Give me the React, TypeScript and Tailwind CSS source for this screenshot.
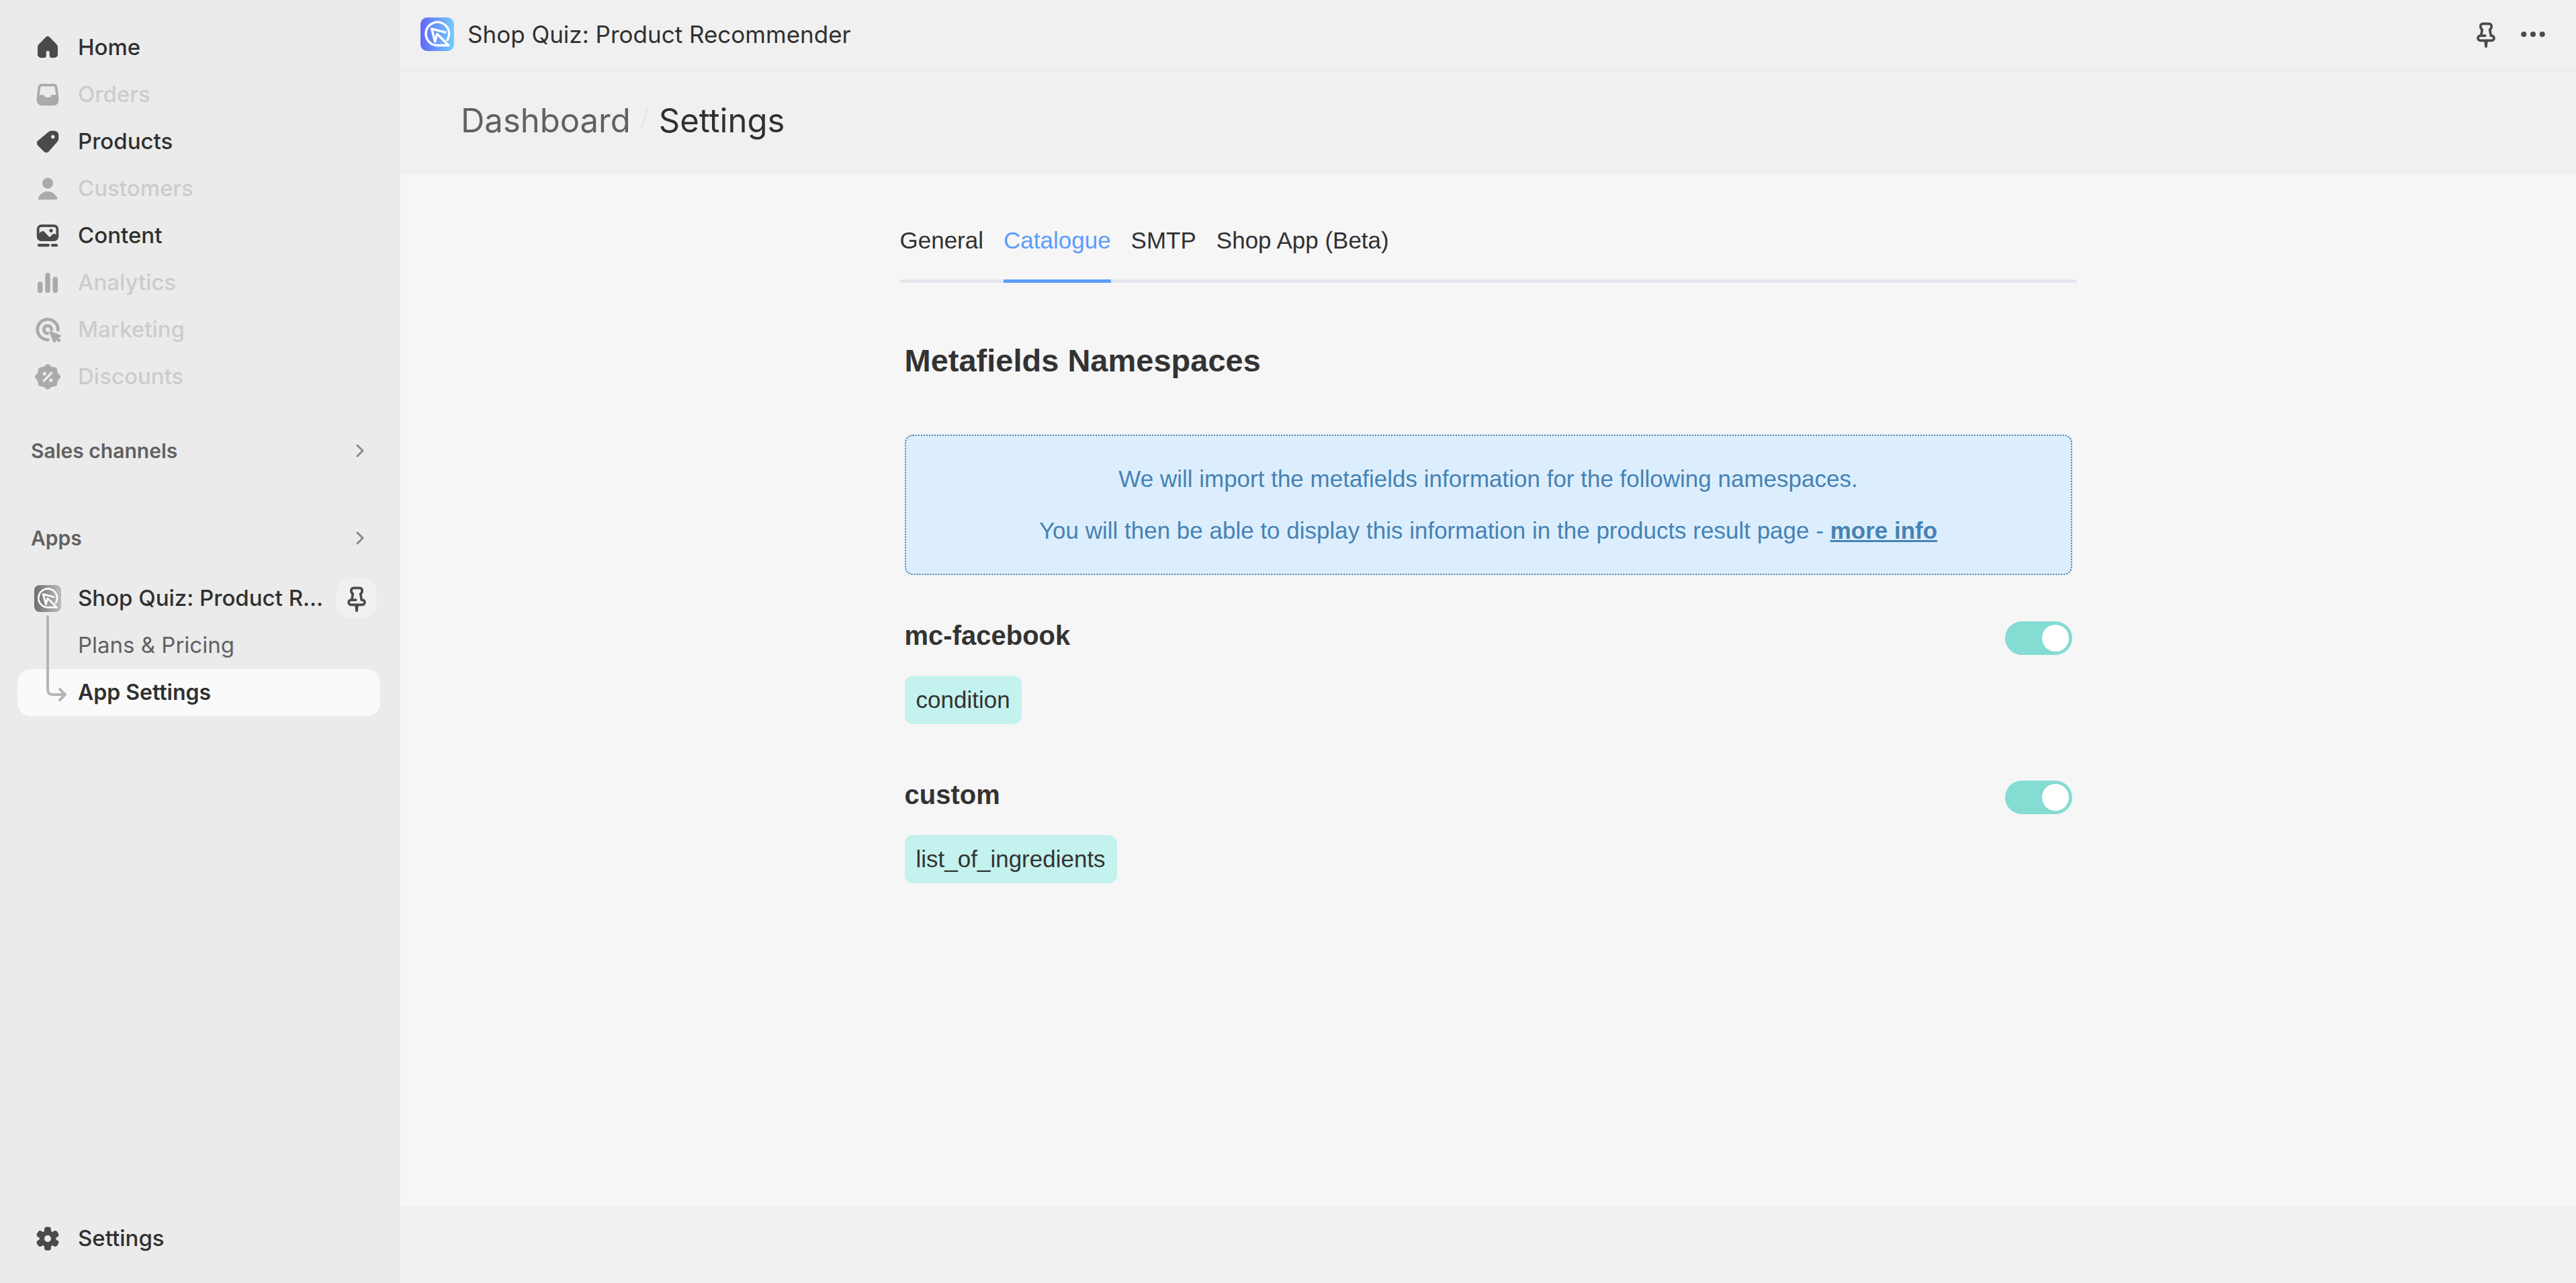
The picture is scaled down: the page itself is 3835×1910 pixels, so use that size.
import React, { useId, useState } from "react";

function Icon({ children, className = "" }: { children: React.ReactNode; className?: string }) {
  return (
    <svg viewBox="0 0 20 20" className={`h-[50px] w-[50px] shrink-0 ${className}`} fill="currentColor" aria-hidden="true">
      {children}
    </svg>
  );
}

const HomeIcon = (
  <path d="M8.75 3.75a1.75 1.75 0 0 1 2.5 0l3.95 4.1c.5.55.8 1.25.8 2v4.25a1.9 1.9 0 0 1-1.9 1.9h-1.8a1.2 1.2 0 0 1-1.2-1.2v-2a.9.9 0 0 0-.9-.9h-.2a.9.9 0 0 0-.9.9v2a1.2 1.2 0 0 1-1.2 1.2h-2A1.9 1.9 0 0 1 4 14.1V9.85c0-.75.3-1.45.8-2z" />
);

const OrdersIcon = (
  <path
    fillRule="evenodd"
    d="M6.5 3.5h7a2.3 2.3 0 0 1 2.28 2l.59 4.8q.13 1 .13 2v1.2a3 3 0 0 1-3 3h-7a3 3 0 0 1-3-3v-1.2q0-1 .13-2l.59-4.8a2.3 2.3 0 0 1 2.28-2M6.5 5a.8.8 0 0 0-.8.7L5.1 10.1h2.15c.4 0 .65.2.8.55l.15.3c.15.35.4.55.8.55h2c.4 0 .65-.2.8-.55l.15-.3c.15-.35.4-.55.8-.55h2.15l-.6-4.4a.8.8 0 0 0-.8-.7z"
  />
);

const ProductsIcon = (
  <path
    fillRule="evenodd"
    d="M10.3 4.3c.5-.5 1.2-.8 1.95-.8h1.75a2.5 2.5 0 0 1 2.5 2.5v2.1c0 .7-.25 1.35-.7 1.85l-5.15 5.85a1.95 1.95 0 0 1-2.85.1L4.1 12.2a2 2 0 0 1-.05-2.75zM13.1 8.1a1.05 1.05 0 1 0 0-2.1 1.05 1.05 0 0 0 0 2.1"
  />
);

const CustomersIcon = (
  <>
    <circle cx="10" cy="6.7" r="3.2" />
    <path d="M4.3 15.6C5.3 13.2 7.5 11.6 10 11.6s4.7 1.6 5.7 4c.2.5-.1.9-.7.9H5c-.6 0-.9-.4-.7-.9" />
  </>
);

const ContentIcon = (
  <>
    <path
      fillRule="evenodd"
      d="M6.2 3.3h7.6a2.7 2.7 0 0 1 2.7 2.7v4.5a2.7 2.7 0 0 1-2.7 2.7H6.2a2.7 2.7 0 0 1-2.7-2.7V6a2.7 2.7 0 0 1 2.7-2.7M6.3 4.8A1.3 1.3 0 0 0 5 6.1v2.4l1-.9c.6-.5 1.4-.5 2 0l3.1 3.3 1.7-1.7c.5-.5 1.2-.6 1.7-.2l.5.3V6.1a1.3 1.3 0 0 0-1.3-1.3z"
    />
    <circle cx="12" cy="6.9" r="1.05" />
    <rect x="4" y="14.8" width="7.1" height="1.7" rx=".7" />
    <rect x="12" y="14.8" width="4" height="1.7" rx=".7" />
  </>
);

const AnalyticsIcon = (
  <>
    <rect x="4" y="9.3" width="3" height="6.7" rx="1.4" />
    <rect x="8.5" y="4" width="3" height="12" rx="1.4" />
    <rect x="13" y="6.4" width="3" height="9.6" rx="1.4" />
  </>
);

const MarketingIcon = (
  <>
    <g fill="none" stroke="currentColor" strokeWidth="1.9" strokeLinecap="round">
      <path d="M16.1 10.1A6.1 6.1 0 1 0 10.1 15.9" />
      <path d="M12.3 9.9A2.3 2.3 0 1 0 9.9 12.1" />
    </g>
    <path d="M11.7 10.9l5.9 2.2c.5.2.5.8.1 1l-1.2.7 1 1a.7.7 0 0 1 0 1l-.3.3a.7.7 0 0 1-1 0l-1-1-.8 1.3c-.2.4-.9.4-1-.1L11 11.6c-.2-.5.2-.9.7-.7" />
  </>
);

const DiscountsIcon = (
  <>
    <path
      stroke="currentColor"
      strokeWidth="2.4"
      strokeLinejoin="round"
      d="M10 3.6l1.9 1.6 2.5.4.4 2.5L16.4 10l-1.6 1.9-.4 2.5-2.5.4L10 16.4l-1.9-1.6-2.5-.4-.4-2.5L3.6 10l1.6-1.9.4-2.5 2.5-.4z"
    />
    <path d="M7.7 12.4l4.6-4.8" fill="none" className="stroke-[#ebebeb]" strokeWidth="1.4" strokeLinecap="round" />
    <circle cx="8.1" cy="8.1" r="1.05" className="fill-[#ebebeb]" />
    <circle cx="11.9" cy="12" r="1.05" className="fill-[#ebebeb]" />
  </>
);

const GearIcon = (
  <>
    <circle cx="10" cy="10" r="4.9" />
    <rect x="8" y="3" width="4" height="14" rx="1.5" />
    <rect x="8" y="3" width="4" height="14" rx="1.5" transform="rotate(60 10 10)" />
    <rect x="8" y="3" width="4" height="14" rx="1.5" transform="rotate(120 10 10)" />
    <circle cx="10" cy="10" r="2" className="fill-[#ebebeb]" />
  </>
);

const PinIcon = (
  <>
    <path
      fill="none"
      stroke="currentColor"
      strokeWidth="1.5"
      strokeLinecap="round"
      strokeLinejoin="round"
      d="M9.5 10.8H7.1L7.7 7.2C7.1 6.8 6.75 6.2 6.75 5.4V5.1a1.35 1.35 0 0 1 1.35-1.35h3.8a1.35 1.35 0 0 1 1.35 1.35v.3c0 .8-.35 1.4-.95 1.8l.6 3.6h.5a1.35 1.35 0 0 1 1.35 1.35v.2a1.35 1.35 0 0 1-1.35 1.35H6.6a1.35 1.35 0 0 1-1.35-1.35v-.2a1.35 1.35 0 0 1 1.35-1.35h.5"
    />
    <path d="M8.9 14h2.2l-.35 3.5c-.1.65-1.4.65-1.5 0z" />
  </>
);

function AppLogo({ from, to, className }: { from: string; to: string; className: string }) {
  const id = useId();
  return (
    <svg viewBox="0 0 50 50" className={`shrink-0 ${className}`} aria-hidden="true">
      <defs>
        <linearGradient id={id} x1="0" y1="0" x2="1" y2="0">
          <stop offset="0" stopColor={from} />
          <stop offset="1" stopColor={to} />
        </linearGradient>
      </defs>
      <rect width="50" height="50" rx="10" fill={`url(#${id})`} />
      <path
        d="M40 33.3A17.3 17.3 0 1 0 24.3 41.5H42L24.7 24.5 21.7 36 16.7 17l20 5.2"
        fill="none"
        stroke="#fff"
        strokeWidth="3.4"
        strokeLinecap="round"
        strokeLinejoin="round"
      />
    </svg>
  );
}

function Chevron() {
  return (
    <svg viewBox="0 0 12 20" className="h-5 w-3 text-[#8a8a8a]" aria-hidden="true">
      <path d="M2 2l8 8-8 8" fill="none" stroke="currentColor" strokeWidth="3" strokeLinecap="round" strokeLinejoin="round" />
    </svg>
  );
}

const navItems = [
  { label: "Home", icon: HomeIcon, enabled: true },
  { label: "Orders", icon: OrdersIcon, enabled: false },
  { label: "Products", icon: ProductsIcon, enabled: true },
  { label: "Customers", icon: CustomersIcon, enabled: false },
  { label: "Content", icon: ContentIcon, enabled: true },
  { label: "Analytics", icon: AnalyticsIcon, enabled: false },
  { label: "Marketing", icon: MarketingIcon, enabled: false },
  { label: "Discounts", icon: DiscountsIcon, enabled: false },
];

function NavItem({ label, icon, enabled }: { label: string; icon: React.ReactNode; enabled: boolean }) {
  return (
    <a
      href="#"
      aria-disabled={!enabled}
      className={`flex h-[70px] items-center gap-5 pl-5 text-[33px] font-medium ${enabled ? "text-[#303030]" : "text-[#cccccc]"}`}
    >
      <Icon className={enabled ? "text-[#4a4a4a]" : "text-[#aaaaaa]"}>{icon}</Icon>
      {label}
    </a>
  );
}

function SectionButton({ label, className }: { label: string; className: string }) {
  return (
    <button type="button" className={`flex h-[70px] w-full items-center justify-between pr-6 pl-5 text-[30px] font-semibold text-[#616161] ${className}`}>
      {label}
      <Chevron />
    </button>
  );
}

function Sidebar() {
  return (
    <aside className="flex w-[596px] shrink-0 flex-col bg-[#ebebeb] pt-9 pr-[30px] pb-[31px] pl-[26px]">
      <nav className="flex flex-col" aria-label="Main">
        {navItems.map((item) => (
          <NavItem key={item.label} {...item} />
        ))}
        <SectionButton label="Sales channels" className="mt-10" />
        <SectionButton label="Apps" className="mt-[60px]" />
        <div className="relative mt-5">
          <div className="flex h-[70px] items-center pr-[5px] pl-[25px]">
            <AppLogo from="#6f6f6f" to="#bcbcbc" className="h-10 w-10" />
            <a href="#" title="Shop Quiz: Product Recommender" className="ml-[25px] text-[33px] font-medium whitespace-nowrap text-[#303030]">
              Shop Quiz: Product R...
            </a>
            <button type="button" aria-label="Unpin app" className="ml-auto flex h-[60px] w-[60px] items-center justify-center rounded-[20px] bg-[#f0f0f0] text-[#4a4a4a]">
              <Icon>{PinIcon}</Icon>
            </button>
          </div>
          <a href="#" className="flex h-[70px] items-center pl-[90px] text-[33px] text-[#616161]">
            Plans &amp; Pricing
          </a>
          <a href="#" aria-current="page" className="flex h-[70px] items-center rounded-[20px] bg-[#fafafa] pl-[90px] text-[32px] font-semibold text-[#303030]">
            App Settings
          </a>
          <svg viewBox="0 0 32 130" className="pointer-events-none absolute top-[60px] left-[43px] h-[130px] w-8 text-[#b5b5b5]" aria-hidden="true">
            <path d="M2 2v108q0 8 8 8h17M20 110l8 8-8 8" fill="none" stroke="currentColor" strokeWidth="4" strokeLinecap="round" strokeLinejoin="round" />
          </svg>
        </div>
      </nav>
      <div className="mt-auto">
        <NavItem label="Settings" icon={GearIcon} enabled />
      </div>
    </aside>
  );
}

function Toggle({ label }: { label: string }) {
  const [on, setOn] = useState(true);
  return (
    <label className="relative mt-1 block h-[50px] w-[100px] shrink-0 cursor-pointer">
      <input
        type="checkbox"
        role="switch"
        aria-label={label}
        checked={on}
        onChange={(e) => setOn(e.target.checked)}
        className="peer block h-[50px] w-[100px] cursor-pointer appearance-none rounded-full bg-[#cccccc] checked:bg-[#84dcd3]"
      />
      <span className="pointer-events-none absolute top-[5px] left-[5px] h-10 w-10 rounded-full bg-white peer-checked:left-[55px]" />
    </label>
  );
}

function Namespace({ name, field }: { name: string; field: string }) {
  return (
    <section>
      <div className="flex items-start justify-between">
        <h3 className="text-[40px] leading-[50px] font-bold">{name}</h3>
        <Toggle label={name} />
      </div>
      <span className="mt-[31px] inline-block rounded-xl bg-[#c4f2ee] px-[17px] text-[35px] leading-[72px]">{field}</span>
    </section>
  );
}

const tabs = ["General", "Catalogue", "SMTP", "Shop App (Beta)"];

function SettingsContent() {
  const [active, setActive] = useState("Catalogue");
  return (
    <main className="flex flex-1 flex-col items-center bg-[#f6f6f6] pt-[75px] font-['Liberation_Sans',Arial,sans-serif] text-[#333333]">
      <div className="w-full max-w-[1752px]">
        <div role="tablist" className="flex gap-[30px] border-b-[5px] border-[#e4e7ed]">
          {tabs.map((tab) => (
            <button
              key={tab}
              type="button"
              role="tab"
              aria-selected={tab === active}
              onClick={() => setActive(tab)}
              className={`-mb-[5px] border-b-[5px] pb-[33px] text-[35px] leading-[50px] ${
                tab === active ? "border-[#5c9dfa] text-[#5c9dfa]" : "border-transparent text-[#303133]"
              }`}
            >
              {tab}
            </button>
          ))}
        </div>
        <div className="px-[7px] pt-[86px]">
          <h2 className="text-[47px] leading-[60px] font-bold">Metafields Namespaces</h2>
          <div className="mt-20 flex flex-col gap-[31px] rounded-xl border-2 border-dotted border-[#4682b4] bg-[#dceefd] px-10 py-[41px] text-center text-[35px] leading-[46px] text-[#4682b4]">
            <p>We will import the metafields information for the following namespaces.</p>
            <p>
              You will then be able to display this information in the products result page -{" "}
              <a href="#" className="font-bold underline">
                more info
              </a>
            </p>
          </div>
          <div className="mt-[65px] flex flex-col gap-20">
            <Namespace name="mc-facebook" field="condition" />
            <Namespace name="custom" field="list_of_ingredients" />
          </div>
        </div>
      </div>
    </main>
  );
}

export default function App() {
  return (
    <div className="flex min-h-screen bg-[#f0f0f0] font-['Inter',sans-serif] text-[#303030]">
      <Sidebar />
      <div className="flex min-w-0 flex-1 flex-col">
        <header className="flex h-[106px] items-center border-b-2 border-[#ebebeb] pr-[39px] pb-0.5 pl-[30px]">
          <AppLogo from="#6366f8" to="#74cdfc" className="h-[50px] w-[50px]" />
          <h1 className="ml-5 text-[35px] font-normal">Shop Quiz: Product Recommender</h1>
          <div className="ml-auto flex gap-5 text-[#4a4a4a]">
            <button type="button" aria-label="Pin app">
              <Icon>{PinIcon}</Icon>
            </button>
            <button type="button" aria-label="More actions">
              <Icon>
                <circle cx="4.5" cy="10" r="1.6" />
                <circle cx="10" cy="10" r="1.6" />
                <circle cx="15.5" cy="10" r="1.6" />
              </Icon>
            </button>
          </div>
        </header>
        <nav aria-label="Breadcrumb" className="flex h-[152px] items-center border-b-2 border-[#ebebeb] pb-0.5 pl-[90px] text-[49px]">
          <a href="#" className="text-[#616161]">
            Dashboard
          </a>
          <svg viewBox="0 0 12 32" className="mx-[15px] mb-2 h-8 w-3 text-[#e3e3e3]" aria-hidden="true">
            <path d="M11 1L1 31" stroke="currentColor" strokeWidth="2" strokeLinecap="round" />
          </svg>
          <span aria-current="page">Settings</span>
        </nav>
        <SettingsContent />
        <footer className="h-[114px]" />
      </div>
    </div>
  );
}
